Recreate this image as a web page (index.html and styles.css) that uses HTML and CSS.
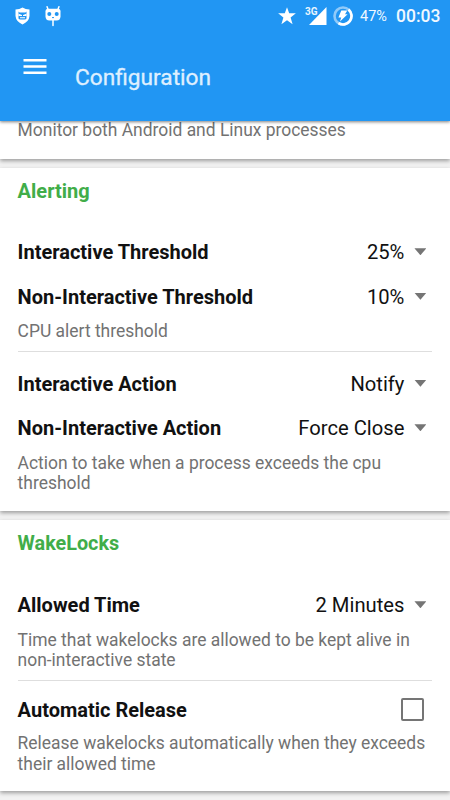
FILE: index.html
```html
<!DOCTYPE html>
<html lang="en">
<head>
<meta charset="utf-8">
<title>Configuration</title>
<link rel="stylesheet" href="styles.css">
</head>
<body>
<header class="appbar">
  <div class="status">
    <svg class="shield" width="17" height="18" viewBox="0 0 16 18"><path fill="#fff" d="M8 .5Q11 2.600 15 2.600V9Q14.500 14.500 8 17.500Q1.500 14.500 1 9V2.600Q5 2.600 8 .5Z"/><path fill="#2196f3" d="M4 4.500l1 1h6l1-1v7q-.3 1-2 1H6q-1.700 0-2-1Z"/><path fill="#fff" d="M4 6.800l3.500 1.200v1H4zM12 6.800L8.500 8v1H12zM5.500 10.300h5v1h-5z"/></svg>
    <svg class="cid" width="18" height="22" viewBox="0 0 18 22"><path d="M4.200 5L3.100 1.800M13.800 5l1.100-3.200M9 14v6.500" stroke="#fff" stroke-width="1.500" stroke-linecap="round"/><path fill="#fff" d="M4 3.800h10q2.500 0 2.500 2.500v5Q16.500 15.500 12.500 15.500h-7Q1.500 15.500 1.500 11.300v-5Q1.500 3.800 4 3.800Z"/><circle cx="5.300" cy="9" r="2" fill="#2196f3"/><circle cx="12.700" cy="9" r="2" fill="#2196f3"/><path d="M8 12.600h2" stroke="#2196f3"/></svg>
    <span class="spacer"></span>
    <svg class="star" width="20" height="18" viewBox="0 0 20 18"><path fill="#fff" d="M10 .3l2.200 6h6.700l-5.300 4.200 2 6.800L10 13.300l-5.600 4 2-6.800L1.100 6.300h6.700z"/></svg>
    <span class="signal"><span class="net">3G</span><svg width="18" height="18" viewBox="0 0 18 18"><path fill="#fff" d="M17.500 0v18H0z"/></svg></span>
    <svg class="battery" width="20" height="20" viewBox="0 0 20 20"><circle cx="10" cy="10" r="8.500" fill="none" stroke="#90caf9" stroke-width="2.600"/><path d="M15.500 3.500A8.500 8.500 0 0 1 5.500 17.200" fill="none" stroke="#fff" stroke-width="2.600"/><path fill="#fff" d="M8.300 4.500h6l-2.300 3.700h2.600L7 15.600l1.200-4.200H5.400z"/></svg>
    <span class="percent">47%</span>
    <span class="clock">00:03</span>
  </div>
  <div class="toolbar">
    <svg class="menu" width="24" height="18" viewBox="0 0 24 18"><path fill="#fff" d="M.5 1h23v2.500H.5zM.5 7.200h23v2.500H.5zM.5 13.500h23V16H.5z"/></svg>
    <h1>Configuration</h1>
  </div>
</header>
<main>
  <section class="card first"><p>Monitor both Android and Linux processes</p></section>
  <section class="card alerting">
    <h2>Alerting</h2>
    <div class="row"><span class="label">Interactive Threshold</span><span class="value">25%</span><i class="arrow"></i></div>
    <div class="row"><span class="label">Non-Interactive Threshold</span><span class="value">10%</span><i class="arrow"></i></div>
    <p>CPU alert threshold</p>
    <hr>
    <div class="row"><span class="label">Interactive Action</span><span class="value">Notify</span><i class="arrow"></i></div>
    <div class="row"><span class="label">Non-Interactive Action</span><span class="value">Force Close</span><i class="arrow"></i></div>
    <p>Action to take when a process exceeds the cpu<br>threshold</p>
  </section>
  <section class="card wakelocks">
    <h2>WakeLocks</h2>
    <div class="row"><span class="label">Allowed Time</span><span class="value">2 Minutes</span><i class="arrow"></i></div>
    <p>Time that wakelocks are allowed to be kept alive in<br>non-interactive state</p>
    <hr>
    <div class="row release"><span class="label">Automatic Release</span><i class="checkbox"></i></div>
    <p>Release wakelocks automatically when they exceeds<br>their allowed time</p>
  </section>
</main>
</body>
</html>
```
FILE: styles.css
```css
* { box-sizing: border-box; }
body {
  margin: 0;
  width: 450px;
  height: 800px;
  overflow: hidden;
  display: flex;
  flex-direction: column;
  background: #f2f2f2;
  font-family: Roboto, "Liberation Sans", sans-serif;
}
.appbar {
  position: relative;
  z-index: 1;
  flex: none;
  height: 121px;
  background: #2196f3;
  color: #fff;
  box-shadow: 0 1px 3px rgba(0, 0, 0, .5);
}
.status {
  display: flex;
  align-items: center;
  height: 32px;
  padding: 0 10px 0 14px;
}
.status svg { display: block; flex: none; }
.cid { margin-left: 13px; }
.spacer { flex: 1; }
.star { margin-right: 8px; }
.signal { display: flex; align-items: flex-start; margin-right: 6px; }
.net { width: 4px; font-size: 10px; line-height: 9px; font-weight: 700; white-space: nowrap; color: #e9f5fe; }
.battery { margin-right: 7px; }
.percent { width: 36px; font-size: 14.5px; color: #f0f8ff; }
.clock { width: 44px; font-size: 17.5px; font-weight: 500; color: #f0f8ff; }
.toolbar { display: flex; align-items: flex-start; padding-left: 23px; }
.menu { display: block; margin-top: 26px; }
h1 {
  margin: 30.5px 0 0 28px;
  font-size: 22.7px;
  line-height: 30px;
  font-weight: 400;
  color: #deefff;
  -webkit-text-stroke: .35px #deefff;
}
main { flex: 1; }
.card {
  padding: 0 17.6px;
  margin-bottom: 9px;
  background: #fff;
  box-shadow: 0 2px 4px rgba(0, 0, 0, .35);
}
.first { display: flow-root; height: 38px; }
.alerting { height: 343px; }
.wakelocks { height: 271px; }
h2 {
  margin: 0;
  height: 62px;
  padding-top: 11px;
  font-size: 20px;
  line-height: 24px;
  font-weight: 700;
  color: #41ad49;
}
.wakelocks h2 { height: 63px; padding-top: 12px; font-size: 19.8px; }
.row { display: flex; align-items: center; height: 44.5px; padding-right: 6px; }
.label { flex: 1; font-size: 20px; font-weight: 700; color: #111; white-space: nowrap; }
.value { font-size: 20.2px; color: #111; }
.arrow {
  width: 12px;
  height: 7px;
  margin: -1px 0 0 10px;
  background: #757575;
  clip-path: polygon(0 0, 100% 0, 50% 100%);
}
p {
  margin: 2px 0 0;
  font-size: 17.45px;
  line-height: 20.5px;
  color: #727272;
  white-space: nowrap;
}
.first p { margin: -1px 0 0; }
hr { height: 1px; margin: 9px 0 10px; border: 0; background: #dedede; }
.release { margin-top: -13px; padding-top: 0; }
hr + .release { margin-top: -3px; }
.release + p { margin-top: 1px; }
.checkbox { width: 23px; height: 23px; margin-right: 2px; border: 2px solid #757575; border-radius: 2px; }
```
